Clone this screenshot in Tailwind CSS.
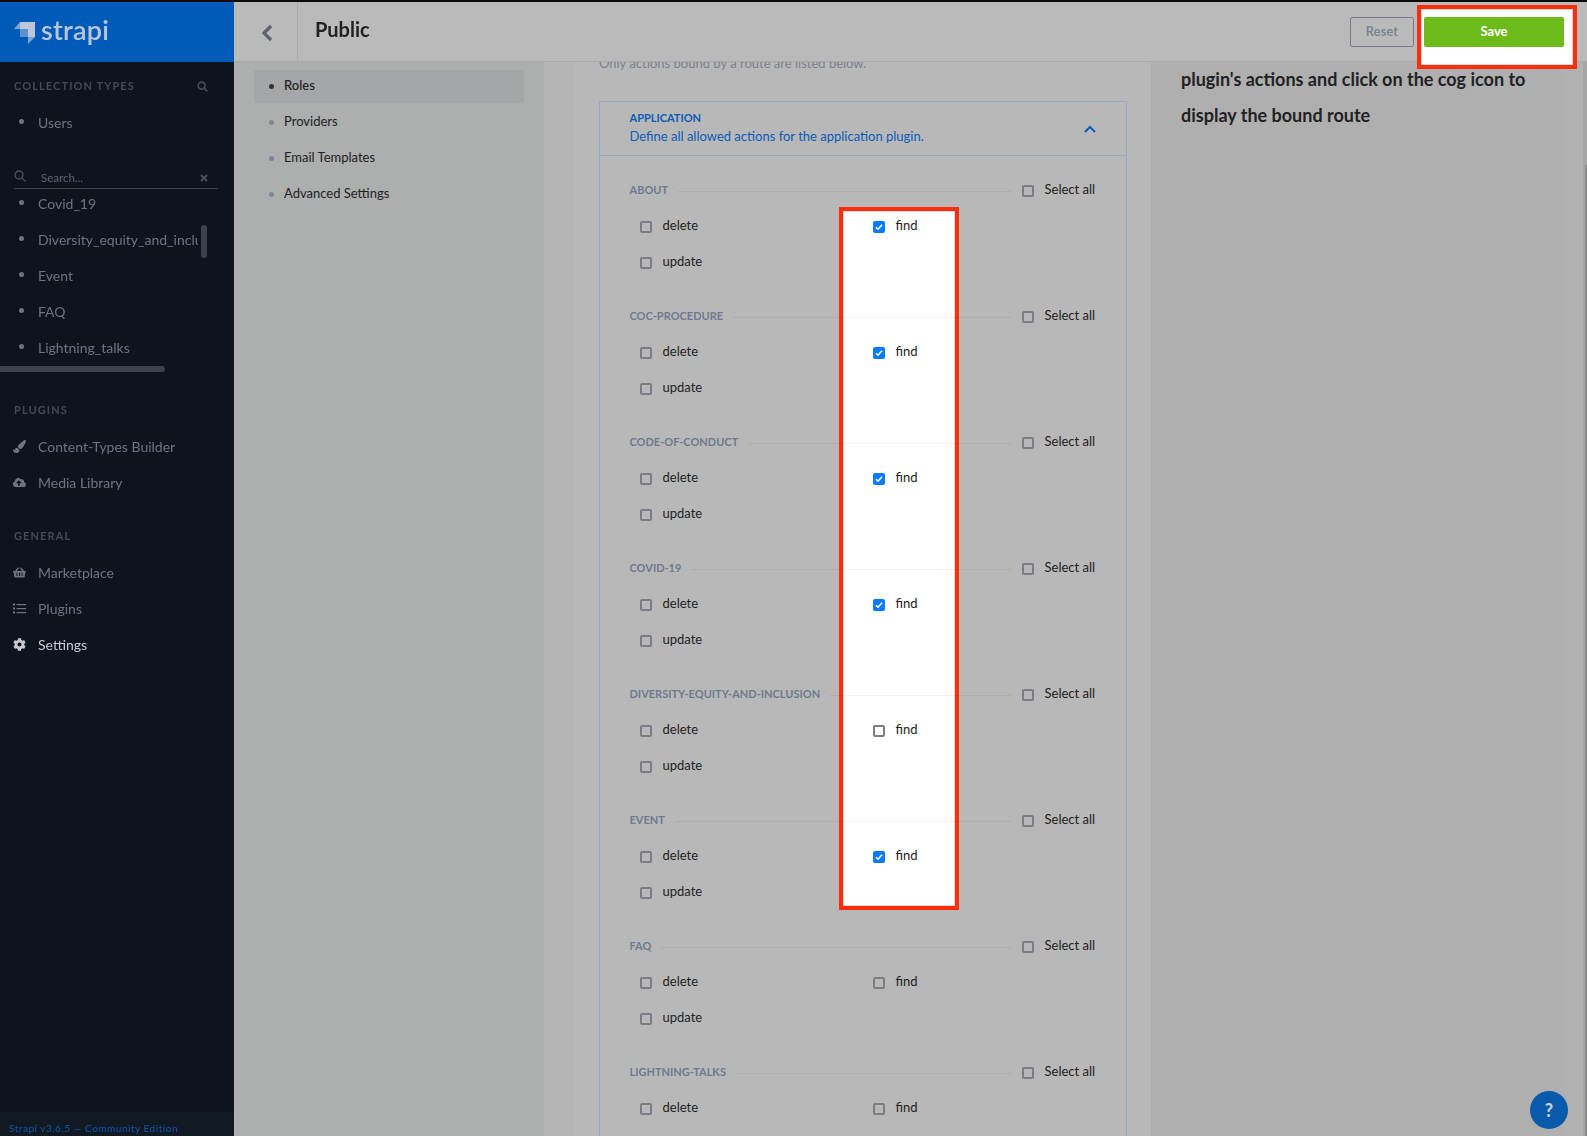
<!DOCTYPE html>
<html lang="en">
<head>
<meta charset="utf-8">
<title>Strapi Roles</title>
<script src="https://cdn.jsdelivr.net/npm/@tailwindcss/browser@4"></script>
</head>
<body class="bg-[#b8b8b8]">
<div class="relative w-[1587px] h-[1136px] overflow-hidden flex flex-col font-['Lato',sans-serif] blur-[0.35px]">
  <div class="h-[2px] bg-[#0a0a0a] shrink-0"></div>
  <div class="flex flex-1 min-h-0">
    <!-- Sidebar -->
    <aside class="relative w-[234px] shrink-0 bg-[#0d141e] flex flex-col text-[14px] text-[#6d7480]">
      <div class="h-[60px] bg-[#005ab8] flex items-center pl-[14px] shrink-0">
        <svg class="w-[24px] h-[28px] mt-[2px]" viewBox="14 20 24 28"><path d="M20 23h15v15h-7v-8h-8z" fill="#bcc8d8"/><path d="M14 30l6-7v7z" fill="#7fa3d0"/><path d="M20 30h8v8h-8z" fill="#5d90cc"/><path d="M28 38h7l-7 7z" fill="#7fa3d0"/></svg>
        <span class="ml-[3px] text-[27px] leading-none font-semibold text-[#b9c6d8] tracking-[0.2px] -mt-[6px]">strapi</span>
      </div>
      <div class="h-[42px] pt-[6px] px-[14px] flex items-center justify-between shrink-0">
        <span class="text-[11px] font-bold tracking-[1.1px] text-[#434a54]">COLLECTION TYPES</span>
        <svg class="w-[11px] h-[11px] mr-[12px]" viewBox="0 0 12 12" fill="none" stroke="#454c57" stroke-width="1.8"><circle cx="5" cy="5" r="3.8"/><path d="M8 8l3.3 3.3"/></svg>
      </div>
      <div class="h-[36px] flex items-center shrink-0"><span class="w-[5px] h-[5px] rounded-full bg-[#6d7480] ml-[19px] mr-[14px] -mt-[2px]"></span>Users</div>
      <div class="h-[49px] ml-[14px] mr-[16px] flex items-end border-b border-[#3d434d] pb-[3px] shrink-0">
        <svg class="w-[12px] h-[12px] mb-[3px]" viewBox="0 0 12 12" fill="none" stroke="#4b525d" stroke-width="1.3"><circle cx="5" cy="5" r="4"/><path d="M8 8l3.5 3.5"/></svg>
        <span class="ml-[15px] text-[11.5px] text-[#5f6570] flex-1 leading-[14px]">Search...</span>
        <svg class="w-[8px] h-[8px] mb-[3px] mr-[10px]" viewBox="0 0 8 8" stroke="#4b525d" stroke-width="1.8"><path d="M1 1l6 6M7 1L1 7"/></svg>
      </div>
      <div class="-mt-[4px] shrink-0">
        <div class="h-[36px] flex items-center"><span class="w-[5px] h-[5px] rounded-full bg-[#6d7480] ml-[19px] mr-[14px] -mt-[2px] shrink-0"></span>Covid_19</div>
        <div class="h-[36px] flex items-center"><span class="w-[5px] h-[5px] rounded-full bg-[#6d7480] ml-[19px] mr-[14px] -mt-[2px] shrink-0"></span><span class="w-[160px] overflow-hidden whitespace-nowrap">Diversity_equity_and_inclusion</span></div>
        <div class="h-[36px] flex items-center"><span class="w-[5px] h-[5px] rounded-full bg-[#6d7480] ml-[19px] mr-[14px] -mt-[2px] shrink-0"></span>Event</div>
        <div class="h-[36px] flex items-center"><span class="w-[5px] h-[5px] rounded-full bg-[#6d7480] ml-[19px] mr-[14px] -mt-[2px] shrink-0"></span>FAQ</div>
        <div class="h-[36px] flex items-center"><span class="w-[5px] h-[5px] rounded-full bg-[#6d7480] ml-[19px] mr-[14px] -mt-[2px] shrink-0"></span>Lightning_talks</div>
      </div>
      <div class="absolute left-[201px] top-[223px] w-[6px] h-[33px] rounded-[3px] bg-[#3c424c]"></div>
      <div class="absolute left-0 top-[364px] w-[165px] h-[6px] rounded-r-[3px] bg-[#3c424c]"></div>
      <div class="h-[63px] pt-[27px] px-[14px] flex items-center shrink-0 text-[11px] font-bold tracking-[1.1px] text-[#434a54]">PLUGINS</div>
      <div class="h-[36px] flex items-center shrink-0">
        <svg class="w-[13px] h-[13px] ml-[13px] mr-[12px]" viewBox="0 0 512 512" fill="#6d7480"><path d="M167.02 309.34c-40.12 2.58-76.53 17.86-97.19 72.3-2.35 6.21-8 9.98-14.59 9.98-11.11 0-45.46-27.67-55.25-34.35C0 439.62 37.93 512 128 512c75.86 0 128-43.77 128-120.19 0-3.11-.65-6.08-.97-9.13l-88.01-73.34zM457.89 0c-15.16 0-29.37 6.71-40.21 16.45C213.27 199.05 192 203.34 192 257.09c0 13.7 3.25 26.76 8.73 38.7l63.82 53.18c7.21 1.8 14.64 3.03 22.39 3.03 62.11 0 98.11-45.47 211.16-256.46 7.38-14.35 13.9-29.85 13.9-45.99C512 20.64 486 0 457.89 0z"/></svg>Content-Types Builder</div>
      <div class="h-[36px] flex items-center shrink-0">
        <svg class="w-[13px] h-[13px] ml-[13px] mr-[12px]" viewBox="0 0 640 512" fill="#6d7480"><path d="M537.6 226.6c4.1-10.7 6.4-22.4 6.4-34.6 0-53-43-96-96-96-19.7 0-38.1 6-53.3 16.2C367 64.2 315.3 32 256 32c-88.4 0-160 71.6-160 160 0 2.7.1 5.4.2 8.1C40.2 219.8 0 273.2 0 336c0 79.5 64.5 144 144 144h368c70.7 0 128-57.3 128-128 0-61.9-44-113.6-102.4-125.4zM393.4 288H328v112c0 8.8-7.2 16-16 16h-48c-8.8 0-16-7.2-16-16V288h-65.4c-14.3 0-21.4-17.2-11.3-27.3l105.4-105.4c6.2-6.2 16.4-6.2 22.6 0l105.4 105.4c10.1 10.1 2.9 27.3-11.3 27.3z"/></svg>Media Library</div>
      <div class="h-[54px] pt-[18px] px-[14px] flex items-center shrink-0 text-[11px] font-bold tracking-[1.1px] text-[#434a54]">GENERAL</div>
      <div class="h-[36px] flex items-center shrink-0">
        <svg class="w-[13px] h-[13px] ml-[13px] mr-[12px]" viewBox="0 0 576 512" fill="#6d7480"><path d="M576 216v16c0 13.255-10.745 24-24 24h-8l-26.113 182.788C514.509 462.435 494.257 480 470.37 480H105.63c-23.887 0-44.139-17.565-47.518-41.212L32 256h-8c-13.255 0-24-10.745-24-24v-16c0-13.255 10.745-24 24-24h67.341l106.78-146.821c10.395-14.292 30.407-17.453 44.701-7.058 14.293 10.395 17.453 30.408 7.058 44.701L170.477 192h235.046L326.12 82.821c-10.395-14.292-7.234-34.306 7.059-44.701 14.291-10.395 34.306-7.235 44.701 7.058L484.659 192H552c13.255 0 24 10.745 24 24zM312 392V280c0-13.255-10.745-24-24-24s-24 10.745-24 24v112c0 13.255 10.745 24 24 24s24-10.745 24-24zm112 0V280c0-13.255-10.745-24-24-24s-24 10.745-24 24v112c0 13.255 10.745 24 24 24s24-10.745 24-24zm-224 0V280c0-13.255-10.745-24-24-24s-24 10.745-24 24v112c0 13.255 10.745 24 24 24s24-10.745 24-24z"/></svg>Marketplace</div>
      <div class="h-[36px] flex items-center shrink-0">
        <svg class="w-[13px] h-[13px] ml-[13px] mr-[12px]" viewBox="0 0 13 13" fill="#6d7480"><rect x="0" y="1.5" width="2" height="2"/><rect x="0" y="5.5" width="2" height="2"/><rect x="0" y="9.5" width="2" height="2"/><rect x="3.5" y="2" width="9.5" height="1.2"/><rect x="3.5" y="6" width="9.5" height="1.2"/><rect x="3.5" y="10" width="9.5" height="1.2"/></svg>Plugins</div>
      <div class="h-[36px] flex items-center shrink-0 text-[#c9cbce]">
        <svg class="w-[13px] h-[13px] ml-[13px] mr-[12px]" viewBox="0 0 512 512" fill="#c9cbce"><path d="M487.4 315.7l-42.6-24.6c4.3-23.2 4.3-47 0-70.2l42.6-24.6c4.9-2.8 7.1-8.6 5.5-14-11.1-35.6-30-67.8-54.7-94.6-3.8-4.1-10-5.1-14.8-2.3L380.8 110c-17.9-15.4-38.5-27.3-60.8-35.1V25.8c0-5.6-3.9-10.5-9.4-11.7-36.7-8.2-74.3-7.8-109.2 0-5.5 1.2-9.4 6.1-9.4 11.7V75c-22.2 7.9-42.8 19.8-60.8 35.1L88.7 85.5c-4.9-2.8-11-1.9-14.8 2.3-24.7 26.7-43.6 58.9-54.7 94.6-1.7 5.4.6 11.2 5.5 14L67.3 221c-4.3 23.2-4.3 47 0 70.2l-42.6 24.6c-4.9 2.8-7.1 8.6-5.5 14 11.1 35.6 30 67.8 54.7 94.6 3.8 4.1 10 5.1 14.8 2.3l42.6-24.6c17.9 15.4 38.5 27.3 60.8 35.1v49.2c0 5.6 3.9 10.5 9.4 11.7 36.7 8.2 74.3 7.8 109.2 0 5.5-1.2 9.4-6.1 9.4-11.7v-49.2c22.2-7.9 42.8-19.8 60.8-35.1l42.6 24.6c4.9 2.8 11 1.9 14.8-2.3 24.7-26.7 43.6-58.9 54.7-94.6 1.5-5.5-.7-11.3-5.6-14.1zM256 336c-44.1 0-80-35.9-80-80s35.9-80 80-80 80 35.9 80 80-35.9 80-80 80z"/></svg>Settings</div>
      <div class="mt-auto h-[24px] bg-[#111923] pl-[9px] flex items-center pt-[9px] text-[10px] tracking-[0.5px] text-[#0d52a8] font-medium">Strapi v3.6.5 — Community Edition</div>
    </aside>

    <!-- Main -->
    <div class="flex-1 min-w-0 flex flex-col">
      <header class="relative h-[60px] shrink-0 bg-[#bababa] border-b border-[#a9a9a9] flex items-center">
        <div class="w-[64px] h-full border-r border-[#acacac] flex items-center justify-center">
          <svg class="w-[12px] h-[18px] mt-[3px] ml-[2px]" viewBox="0 0 12 18" fill="none" stroke="#5f636b" stroke-width="3.2"><path d="M10 2L3 9l7 7"/></svg>
        </div>
        <h1 class="ml-[17px] -mt-[5px] text-[20px] font-bold text-[#212121]">Public</h1>
        <div class="ml-auto mr-[23px] flex items-center gap-[10px]">
          <div class="w-[64px] h-[30px] border-[1.5px] border-[#757d8a] rounded-[2px] flex items-center justify-center text-[13px] font-bold text-[#7d8592]">Reset</div>
          <div class="relative z-40 w-[140px] h-[30px] bg-[#6dbb1a] rounded-[2px] flex items-center justify-center text-[13px] font-bold text-white">Save</div>
        </div>
      </header>
      <div class="flex flex-1 min-h-0 overflow-hidden">
        <!-- Sub nav -->
        <nav class="w-[310px] shrink-0 bg-[#adaeae] pt-[6px] pl-[20px] text-[13px] text-[#222]">
          <div class="h-[36px] flex items-center"><div class="w-[270px] h-[33px] bg-[#a5a6a7] rounded-[2px] flex items-center pl-[15px] font-medium"><span class="w-[5px] h-[5px] rounded-full bg-[#333] mr-[10px]"></span>Roles</div></div>
          <div class="h-[36px] flex items-center pl-[15px]"><span class="w-[5px] h-[5px] rounded-full bg-[#7d8592] mr-[10px]"></span>Providers</div>
          <div class="h-[36px] flex items-center pl-[15px]"><span class="w-[5px] h-[5px] rounded-full bg-[#7d8592] mr-[10px]"></span>Email Templates</div>
          <div class="h-[36px] flex items-center pl-[15px]"><span class="w-[5px] h-[5px] rounded-full bg-[#7d8592] mr-[10px]"></span>Advanced Settings</div>
        </nav>
        <!-- Center -->
        <div class="w-[607px] shrink-0 bg-[#b5b5b5] pl-[30px] flex">
          <div class="w-full bg-[#b8b8b8] pl-[25px] pr-[24px] overflow-hidden">
            <p class="-mt-[9px] h-[20px] leading-[20px] mb-[28px] text-[13px] text-[#7c818b]">Only actions bound by a route are listed below.</p>
            <section class="border-[1.5px] border-b-0 border-[#94a8c2] h-[1100px]">
              <div class="h-[53.5px] border-b-[1.5px] border-[#94a8c2] pl-[29.5px] pr-[30px] flex items-center justify-between">
                <div class="text-[#0a5cb8] -mt-[1px]">
                  <div class="text-[11px] font-bold leading-[16px]">APPLICATION</div>
                  <div class="text-[13px] leading-[20px]">Define all allowed actions for the application plugin.</div>
                </div>
                <svg class="w-[12px] h-[8px] mt-[1px]" viewBox="0 0 12 8" fill="none" stroke="#0a5cb8" stroke-width="2"><path d="M1 7l5-5 5 5"/></svg>
              </div>
              <div class="pt-[16px] pl-[29.5px] pr-[29.5px] text-[13px] text-[#222]">
                <!-- ABOUT -->
                <div class="h-[126px]">
                  <div class="h-[36px] flex items-center"><span class="mt-[2px] text-[11px] font-bold text-[#6f7a8f] mr-[10px] whitespace-nowrap">ABOUT</span><span class="relative z-10 mt-[3px] flex-1 h-px bg-black/5"></span><div class="w-[75px] ml-[11px] flex items-center shrink-0"><span class="w-[12px] h-[12px] border-2 border-[#7c7c86] rounded-[2px] mr-[11px] mt-[2px]"></span>Select all</div></div>
                  <div class="grid grid-cols-[233px_1fr] pl-[10px]">
                    <div class="h-[36px] flex items-center"><span class="w-[12px] h-[12px] border-2 border-[#7c7c86] rounded-[2px] mr-[11px] mt-[2px]"></span>delete</div>
                    <div class="relative z-10 h-[36px] flex items-center"><span class="w-[12px] h-[12px] bg-[#0a7aff] rounded-[2px] mr-[11px] mt-[2px] flex items-center justify-center"><svg class="w-[8px] h-[8px]" viewBox="0 0 8 8" fill="none" stroke="#fff" stroke-width="1.6"><path d="M1 4.2l2 2 4-4.4"/></svg></span>find</div>
                    <div class="h-[36px] flex items-center"><span class="w-[12px] h-[12px] border-2 border-[#7c7c86] rounded-[2px] mr-[11px] mt-[2px]"></span>update</div>
                  </div>
                </div>
                <!-- COC -->
                <div class="h-[126px]">
                  <div class="h-[36px] flex items-center"><span class="mt-[2px] text-[11px] font-bold text-[#6f7a8f] mr-[10px] whitespace-nowrap">COC-PROCEDURE</span><span class="relative z-10 mt-[3px] flex-1 h-px bg-black/5"></span><div class="w-[75px] ml-[11px] flex items-center shrink-0"><span class="w-[12px] h-[12px] border-2 border-[#7c7c86] rounded-[2px] mr-[11px] mt-[2px]"></span>Select all</div></div>
                  <div class="grid grid-cols-[233px_1fr] pl-[10px]">
                    <div class="h-[36px] flex items-center"><span class="w-[12px] h-[12px] border-2 border-[#7c7c86] rounded-[2px] mr-[11px] mt-[2px]"></span>delete</div>
                    <div class="relative z-10 h-[36px] flex items-center"><span class="w-[12px] h-[12px] bg-[#0a7aff] rounded-[2px] mr-[11px] mt-[2px] flex items-center justify-center"><svg class="w-[8px] h-[8px]" viewBox="0 0 8 8" fill="none" stroke="#fff" stroke-width="1.6"><path d="M1 4.2l2 2 4-4.4"/></svg></span>find</div>
                    <div class="h-[36px] flex items-center"><span class="w-[12px] h-[12px] border-2 border-[#7c7c86] rounded-[2px] mr-[11px] mt-[2px]"></span>update</div>
                  </div>
                </div>
                <!-- CODE -->
                <div class="h-[126px]">
                  <div class="h-[36px] flex items-center"><span class="mt-[2px] text-[11px] font-bold text-[#6f7a8f] mr-[10px] whitespace-nowrap">CODE-OF-CONDUCT</span><span class="relative z-10 mt-[3px] flex-1 h-px bg-black/5"></span><div class="w-[75px] ml-[11px] flex items-center shrink-0"><span class="w-[12px] h-[12px] border-2 border-[#7c7c86] rounded-[2px] mr-[11px] mt-[2px]"></span>Select all</div></div>
                  <div class="grid grid-cols-[233px_1fr] pl-[10px]">
                    <div class="h-[36px] flex items-center"><span class="w-[12px] h-[12px] border-2 border-[#7c7c86] rounded-[2px] mr-[11px] mt-[2px]"></span>delete</div>
                    <div class="relative z-10 h-[36px] flex items-center"><span class="w-[12px] h-[12px] bg-[#0a7aff] rounded-[2px] mr-[11px] mt-[2px] flex items-center justify-center"><svg class="w-[8px] h-[8px]" viewBox="0 0 8 8" fill="none" stroke="#fff" stroke-width="1.6"><path d="M1 4.2l2 2 4-4.4"/></svg></span>find</div>
                    <div class="h-[36px] flex items-center"><span class="w-[12px] h-[12px] border-2 border-[#7c7c86] rounded-[2px] mr-[11px] mt-[2px]"></span>update</div>
                  </div>
                </div>
                <!-- COVID -->
                <div class="h-[126px]">
                  <div class="h-[36px] flex items-center"><span class="mt-[2px] text-[11px] font-bold text-[#6f7a8f] mr-[10px] whitespace-nowrap">COVID-19</span><span class="relative z-10 mt-[3px] flex-1 h-px bg-black/5"></span><div class="w-[75px] ml-[11px] flex items-center shrink-0"><span class="w-[12px] h-[12px] border-2 border-[#7c7c86] rounded-[2px] mr-[11px] mt-[2px]"></span>Select all</div></div>
                  <div class="grid grid-cols-[233px_1fr] pl-[10px]">
                    <div class="h-[36px] flex items-center"><span class="w-[12px] h-[12px] border-2 border-[#7c7c86] rounded-[2px] mr-[11px] mt-[2px]"></span>delete</div>
                    <div class="relative z-10 h-[36px] flex items-center"><span class="w-[12px] h-[12px] bg-[#0a7aff] rounded-[2px] mr-[11px] mt-[2px] flex items-center justify-center"><svg class="w-[8px] h-[8px]" viewBox="0 0 8 8" fill="none" stroke="#fff" stroke-width="1.6"><path d="M1 4.2l2 2 4-4.4"/></svg></span>find</div>
                    <div class="h-[36px] flex items-center"><span class="w-[12px] h-[12px] border-2 border-[#7c7c86] rounded-[2px] mr-[11px] mt-[2px]"></span>update</div>
                  </div>
                </div>
                <!-- DIVERSITY -->
                <div class="h-[126px]">
                  <div class="h-[36px] flex items-center"><span class="mt-[2px] text-[11px] font-bold text-[#6f7a8f] mr-[10px] whitespace-nowrap">DIVERSITY-EQUITY-AND-INCLUSION</span><span class="relative z-10 mt-[3px] flex-1 h-px bg-black/5"></span><div class="w-[75px] ml-[11px] flex items-center shrink-0"><span class="w-[12px] h-[12px] border-2 border-[#7c7c86] rounded-[2px] mr-[11px] mt-[2px]"></span>Select all</div></div>
                  <div class="grid grid-cols-[233px_1fr] pl-[10px]">
                    <div class="h-[36px] flex items-center"><span class="w-[12px] h-[12px] border-2 border-[#7c7c86] rounded-[2px] mr-[11px] mt-[2px]"></span>delete</div>
                    <div class="relative z-10 h-[36px] flex items-center"><span class="w-[12px] h-[12px] border-2 border-[#7c7c86] rounded-[2px] mr-[11px] mt-[2px]"></span>find</div>
                    <div class="h-[36px] flex items-center"><span class="w-[12px] h-[12px] border-2 border-[#7c7c86] rounded-[2px] mr-[11px] mt-[2px]"></span>update</div>
                  </div>
                </div>
                <!-- EVENT -->
                <div class="h-[126px]">
                  <div class="h-[36px] flex items-center"><span class="mt-[2px] text-[11px] font-bold text-[#6f7a8f] mr-[10px] whitespace-nowrap">EVENT</span><span class="relative z-10 mt-[3px] flex-1 h-px bg-black/5"></span><div class="w-[75px] ml-[11px] flex items-center shrink-0"><span class="w-[12px] h-[12px] border-2 border-[#7c7c86] rounded-[2px] mr-[11px] mt-[2px]"></span>Select all</div></div>
                  <div class="grid grid-cols-[233px_1fr] pl-[10px]">
                    <div class="h-[36px] flex items-center"><span class="w-[12px] h-[12px] border-2 border-[#7c7c86] rounded-[2px] mr-[11px] mt-[2px]"></span>delete</div>
                    <div class="relative z-10 h-[36px] flex items-center"><span class="w-[12px] h-[12px] bg-[#0a7aff] rounded-[2px] mr-[11px] mt-[2px] flex items-center justify-center"><svg class="w-[8px] h-[8px]" viewBox="0 0 8 8" fill="none" stroke="#fff" stroke-width="1.6"><path d="M1 4.2l2 2 4-4.4"/></svg></span>find</div>
                    <div class="h-[36px] flex items-center"><span class="w-[12px] h-[12px] border-2 border-[#7c7c86] rounded-[2px] mr-[11px] mt-[2px]"></span>update</div>
                  </div>
                </div>
                <!-- FAQ -->
                <div class="h-[126px]">
                  <div class="h-[36px] flex items-center"><span class="mt-[2px] text-[11px] font-bold text-[#6f7a8f] mr-[10px] whitespace-nowrap">FAQ</span><span class="mt-[3px] flex-1 h-px bg-black/5"></span><div class="w-[75px] ml-[11px] flex items-center shrink-0"><span class="w-[12px] h-[12px] border-2 border-[#7c7c86] rounded-[2px] mr-[11px] mt-[2px]"></span>Select all</div></div>
                  <div class="grid grid-cols-[233px_1fr] pl-[10px]">
                    <div class="h-[36px] flex items-center"><span class="w-[12px] h-[12px] border-2 border-[#7c7c86] rounded-[2px] mr-[11px] mt-[2px]"></span>delete</div>
                    <div class="h-[36px] flex items-center"><span class="w-[12px] h-[12px] border-2 border-[#7c7c86] rounded-[2px] mr-[11px] mt-[2px]"></span>find</div>
                    <div class="h-[36px] flex items-center"><span class="w-[12px] h-[12px] border-2 border-[#7c7c86] rounded-[2px] mr-[11px] mt-[2px]"></span>update</div>
                  </div>
                </div>
                <!-- LIGHTNING -->
                <div class="h-[126px]">
                  <div class="h-[36px] flex items-center"><span class="mt-[2px] text-[11px] font-bold text-[#6f7a8f] mr-[10px] whitespace-nowrap">LIGHTNING-TALKS</span><span class="mt-[3px] flex-1 h-px bg-black/5"></span><div class="w-[75px] ml-[11px] flex items-center shrink-0"><span class="w-[12px] h-[12px] border-2 border-[#7c7c86] rounded-[2px] mr-[11px] mt-[2px]"></span>Select all</div></div>
                  <div class="grid grid-cols-[233px_1fr] pl-[10px]">
                    <div class="h-[36px] flex items-center"><span class="w-[12px] h-[12px] border-2 border-[#7c7c86] rounded-[2px] mr-[11px] mt-[2px]"></span>delete</div>
                    <div class="h-[36px] flex items-center"><span class="w-[12px] h-[12px] border-2 border-[#7c7c86] rounded-[2px] mr-[11px] mt-[2px]"></span>find</div>
                  </div>
                </div>
              </div>
            </section>
          </div>
        </div>
        <!-- Right help -->
        <aside class="w-[412px] shrink-0 bg-[#afafaf] pl-[30px] pr-[20px] text-[18px] leading-[36px] font-bold text-[#222]"><p class="-mt-[1px]">plugin's actions and click on the cog icon to display the bound route</p></aside>
        <div class="w-[20px] shrink-0 bg-[#b1b1b1]"></div>
        <div class="relative w-[4px] shrink-0 bg-[#a6a6a6]"><div class="absolute right-0 top-[103px] w-[2px] h-[1000px] bg-[#8c8c8c]"></div></div>
      </div>
    </div>
  </div>

  <!-- Annotations -->
  <div class="absolute z-[5] left-[839px] top-[207px] w-[120px] h-[703px] bg-white border-4 border-[#ff2d0a] shadow-[inset_0_0_0_1px_#ddd]"></div>
  <div class="absolute z-30 left-[1417px] top-[5px] w-[160px] h-[64px] bg-white border-4 border-[#ff2d0a] shadow-[inset_0_0_0_1px_#ddd]"></div>

  <!-- Help -->
  <div class="absolute left-[1530px] top-[1091px] w-[38px] h-[38px] rounded-full bg-[#0a5aab] flex items-center justify-center text-[18px] font-black text-[#c5cdd6]">?</div>
</div>
</body>
</html>
